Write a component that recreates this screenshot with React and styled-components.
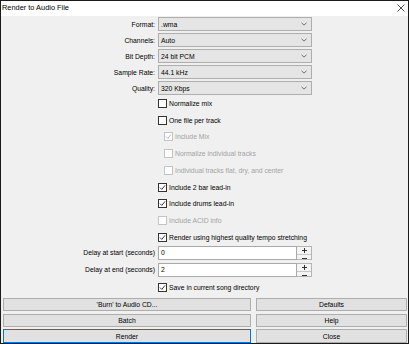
import React from "react";
import styled, { createGlobalStyle } from "styled-components";

const Global = createGlobalStyle`
  html, body { margin: 0; padding: 0; background: #ffffff; }
  * { box-sizing: border-box; }
`;

const Window = styled.div`
  width: 409px;
  height: 344px;
  border: 1px solid #1a1a1a;
  background: #f0f0f0;
  font-family: "Liberation Sans", Arial, sans-serif;
  font-size: 6.8px;
  color: #000;
  display: flex;
  flex-direction: column;
  overflow: hidden;
`;

const TitleBar = styled.div`
  height: 15px;
  background: #ffffff;
  display: flex;
  align-items: center;
  justify-content: space-between;
  padding: 0 3px 2px 1px;
  font-size: 7.4px;
`;

const Form = styled.div`
  display: flex;
  flex-direction: column;
  padding-top: 1px;
`;

const FieldRow = styled.div`
  display: grid;
  grid-template-columns: 154px 154px;
  column-gap: 3px;
  align-items: center;
  height: ${(p) => p.$h || 14}px;
  margin-bottom: ${(p) => p.$mb || 0}px;
`;

const Label = styled.div`
  text-align: right;
  white-space: nowrap;
`;

const Combo = styled.div`
  height: 14px;
  background: #e5e5e5;
  border: 1px solid #adadad;
  display: flex;
  align-items: center;
  justify-content: space-between;
  padding: 0 4px 0 2px;
`;

const CheckRow = styled.div`
  display: grid;
  grid-template-columns: 154px 1fr;
  column-gap: 3px;
  align-items: center;
  height: ${(p) => p.$h || 16.75}px;
`;

const CheckItem = styled.div`
  grid-column: 2;
  display: flex;
  align-items: center;
  gap: 2px;
  margin-left: ${(p) => (p.$indent ? 6 : 0)}px;
  color: ${(p) => (p.$disabled ? "#a3a3a3" : "#000")};
  white-space: nowrap;
`;

const Box = styled.span`
  width: 9px;
  height: 9px;
  border: 1px solid ${(p) => (p.$disabled ? "#c4c4c4" : "#333333")};
  background: #ffffff;
  display: inline-flex;
  align-items: center;
  justify-content: center;
  flex: none;
`;

const SpinWrap = styled.div`
  display: flex;
  height: 14px;
`;

const TextInput = styled.div`
  flex: 1;
  background: #ffffff;
  border: 1px solid #a9a9a9;
  display: flex;
  align-items: center;
  padding-left: 2px;
`;

const Spinner = styled.div`
  width: 15px;
  display: flex;
  flex-direction: column;
  border: 1px solid #b5b5b5;
  border-left: none;
  background: #f4f4f4;
`;

const SpinHalf = styled.div`
  flex: 1;
  display: flex;
  align-items: center;
  justify-content: center;
  border-top: ${(p) => (p.$bottom ? "1px solid #c8c8c8" : "none")};
`;

const Buttons = styled.div`
  display: grid;
  grid-template-columns: 248px 151px;
  column-gap: 5px;
  row-gap: 2.25px;
  padding-left: 2px;
  margin-top: 0.5px;
`;

const Button = styled.div`
  height: 13.5px;
  background: #e1e1e1;
  border: 1px solid ${(p) => (p.$focused ? "#0078d7" : "#adadad")};
  display: flex;
  align-items: center;
  justify-content: center;
`;

const Chevron = () => (
  <svg width="6" height="4" viewBox="0 0 6 4">
    <polyline points="0.5,0.8 3,3.2 5.5,0.8" fill="none" stroke="#606060" strokeWidth="0.9" />
  </svg>
);

const Check = ({ disabled }) => (
  <svg width="7" height="7" viewBox="0 0 7 7">
    <polyline
      points="1,3.6 2.8,5.4 6,1.4"
      fill="none"
      stroke={disabled ? "#b0b0b0" : "#222"}
      strokeWidth="0.9"
    />
  </svg>
);

const CloseX = () => (
  <svg width="8" height="8" viewBox="0 0 8 8">
    <path d="M0.5 0.5 L7.5 7.5 M7.5 0.5 L0.5 7.5" stroke="#222" strokeWidth="0.8" />
  </svg>
);

const PlusMinus = ({ minus }) => (
  <svg width="7" height="7" viewBox="0 0 7 7">
    <path d={minus ? "M1 3.5 H6" : "M1 3.5 H6 M3.5 1 V6"} stroke="#333" strokeWidth="1" />
  </svg>
);

const combos = [
  ["Format:", ".wma"],
  ["Channels:", "Auto"],
  ["Bit Depth:", "24 bit PCM"],
  ["Sample Rate:", "44.1 kHz"],
  ["Quality:", "320 Kbps"],
];

const checks = [
  { label: "Normalize mix" },
  { label: "One file per track" },
  { label: "Include Mix", indent: true, disabled: true, checked: true },
  { label: "Normalize individual tracks", indent: true, disabled: true },
  { label: "Individual tracks flat, dry, and center", indent: true, disabled: true },
  { label: "Include 2 bar lead-in", checked: true },
  { label: "Include drums lead-in", checked: true },
  { label: "Include ACID info", disabled: true },
  { label: "Render using highest quality tempo stretching", checked: true },
];

const CheckBoxLine = ({ label, indent, disabled, checked }) => (
  <CheckItem $indent={indent} $disabled={disabled}>
    <Box $disabled={disabled}>{checked && <Check disabled={disabled} />}</Box>
    <span>{label}</span>
  </CheckItem>
);

const Delay = ({ label, value, mb }) => (
  <FieldRow $mb={mb}>
    <Label>{label}</Label>
    <SpinWrap>
      <TextInput>{value}</TextInput>
      <Spinner>
        <SpinHalf><PlusMinus /></SpinHalf>
        <SpinHalf $bottom><PlusMinus minus /></SpinHalf>
      </Spinner>
    </SpinWrap>
  </FieldRow>
);

export default function App() {
  return (
    <>
      <Global />
      <Window>
        <TitleBar>
          <span>Render to Audio File</span>
          <CloseX />
        </TitleBar>
        <Form>
          {combos.map(([l, v]) => (
            <FieldRow key={l} $mb={2}>
              <Label>{l}</Label>
              <Combo>
                <span>{v}</span>
                <Chevron />
              </Combo>
            </FieldRow>
          ))}
          <div style={{ marginTop: -2 }} />
          {checks.map((c) => (
            <CheckRow key={c.label}>
              <CheckBoxLine {...c} />
            </CheckRow>
          ))}
          <Delay label="Delay at start (seconds)" value="0" mb={3} />
          <Delay label="Delay at end (seconds)" value="2" />
          <CheckRow $h={20.5}>
            <CheckBoxLine label="Save in current song directory" checked />
          </CheckRow>
        </Form>
        <Buttons>
          <Button>'Burn' to Audio CD...</Button>
          <Button>Defaults</Button>
          <Button>Batch</Button>
          <Button>Help</Button>
          <Button $focused>Render</Button>
          <Button>Close</Button>
        </Buttons>
      </Window>
    </>
  );
}
